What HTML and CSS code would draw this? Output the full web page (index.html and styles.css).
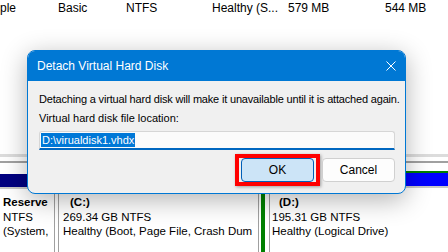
FILE: index.html
```html
<!DOCTYPE html>
<html>
<head>
<meta charset="utf-8">
<link rel="stylesheet" href="styles.css">
</head>
<body>
<div class="screen">
  <div class="list-row">
    <span class="col c1">ple</span>
    <span class="col c2">Basic</span>
    <span class="col c3">NTFS</span>
    <span class="col c4">Healthy (S...</span>
    <span class="col c5">579 MB</span>
    <span class="col c6">544 MB</span>
  </div>
  <div class="blank"></div>
  <div class="band-light"></div>
  <div class="band-dark"></div>
  <div class="parts">
    <div class="part res">
      <div class="hdr navy"></div>
      <div class="txt">
        <div class="name">Reserve</div>
        <div>NTFS</div>
        <div>(System,</div>
      </div>
    </div>
    <div class="part cdrive">
      <div class="hdr navy"></div>
      <div class="txt">
        <div class="name ind">(C:)</div>
        <div>269.34 GB NTFS</div>
        <div>Healthy (Boot, Page File, Crash Dum</div>
      </div>
    </div>
    <div class="ext">
      <div class="part ddrive">
        <div class="hdr blue"></div>
        <div class="txt">
          <div class="name ind">(D:)</div>
          <div>195.31 GB NTFS</div>
          <div>Healthy (Logical Drive)</div>
        </div>
      </div>
    </div>
  </div>
</div>

<div class="dialog">
  <div class="titlebar">
    <span class="title">Detach Virtual Hard Disk</span>
    <svg class="close" width="10" height="10" viewBox="0 0 10 10">
      <path d="M0.5 0.5 L9.5 9.5 M9.5 0.5 L0.5 9.5" stroke="#ffffff" stroke-width="1" fill="none"/>
    </svg>
  </div>
  <div class="body">
    <div class="msg">Detaching a virtual hard disk will make it unavailable until it is attached again.</div>
    <div class="label">Virtual hard disk file location:</div>
    <div class="input"><span class="sel">D:\virualdisk1.vhdx</span></div>
    <div class="buttons">
      <div class="hl"><div class="btn ok">OK</div></div>
      <div class="btn cancel">Cancel</div>
    </div>
  </div>
</div>
</body>
</html>
```

FILE: styles.css
```css
* { box-sizing: border-box; }
html, body { margin: 0; padding: 0; }
body {
  width: 448px;
  height: 252px;
  overflow: hidden;
  background: #ffffff;
  font-family: "Liberation Sans", Arial, sans-serif;
  font-size: 11.5px;
  color: #000;
  position: relative;
}
.screen { width: 448px; height: 252px; overflow: hidden; }

.list-row {
  height: 17px;
  line-height: 17px;
  display: flex;
  white-space: nowrap;
  font-size: 12px;
}
.col { display: block; overflow: hidden; }
.c1 { width: 58px; }
.c2 { width: 68px; }
.c3 { width: 86px; }
.c4 { width: 76px; }
.c5 { width: 97px; }
.c6 { width: 63px; }

.blank { height: 137px; }
.band-light { height: 3px; background: #dcdcdc; }
.band-dark { height: 2px; margin-top: 4px; background: #a0a0a0; }

.parts {
  display: flex;
  padding-top: 8px;
  height: 89px;
  align-items: stretch;
}
.part { overflow: hidden; white-space: nowrap; }
.hdr { height: 15px; border-bottom: 2px solid #c8c8c8; }
.navy { background: #000080; }
.blue { background: #0000ff; }
.txt { padding-top: 6px; line-height: 14.5px; }
.name { font-weight: bold; }
.ind { padding-left: 7px; }

.res { width: 55px; margin-top: 3px; border-right: 1px solid #a0a0a0; }
.res .txt { padding-left: 3px; }
.cdrive { width: 201px; margin-left: 3px; margin-top: 3px; border-left: 1px solid #a0a0a0; border-right: 1px solid #a0a0a0; }
.cdrive .txt { padding-left: 4px; }
.ext {
  margin-left: 2px;
  flex: 1;
  border-top: 2px solid #008000;
  border-left: 4px solid #008000;
  display: flex;
}
.ddrive { flex: 1; margin-left: 4px; border-left: 1px solid #a0a0a0; }
.ddrive .txt { padding-left: 2px; padding-top: 7px; }

/* dialog overlay */
.dialog {
  position: absolute;
  left: 27px;
  top: 50px;
  width: 379px;
  height: 144px;
  border: 1px solid #0078d4;
  border-radius: 8px;
  overflow: hidden;
  background: #f0f0f0;
  box-shadow: 0 6px 26px rgba(0,0,0,0.30);
  display: flex;
  flex-direction: column;
}
.titlebar {
  height: 30px;
  flex: none;
  background: #0078d4;
  color: #fff;
  display: flex;
  align-items: center;
  justify-content: space-between;
  padding: 0 9px 0 9px;
  font-size: 12px;
}
.close { display: block; }
.body {
  flex: 1;
  padding: 11px 10px 0 11px;
  font-size: 11px;
}
.msg { line-height: 14px; white-space: nowrap; letter-spacing: -0.18px; }
.label { line-height: 14px; margin-top: 5px; }
.input {
  margin-top: 6px;
  height: 19px;
  background: #fbfbfb;
  border: 1px solid #d6d6d6;
  border-bottom: 2px solid #0067c0;
  border-radius: 3px 3px 0 0;
  padding: 1px 0 0 1px;
  line-height: 14px;
}
.sel { background: #0078d7; color: #fff; display: inline-block; padding: 0 1px; }
.buttons {
  display: flex;
  justify-content: flex-end;
  align-items: flex-start;
  gap: 2px;
  margin-top: 4px;
}
.hl {
  border: 4px solid #ff0000;
  padding: 0 2px;
  box-shadow: 1px 1px 3px rgba(0,0,0,0.35);
}
.btn {
  width: 73px;
  height: 24px;
  border-radius: 4px;
  display: flex;
  align-items: center;
  justify-content: center;
  font-size: 12px;
}
.ok { background: #cce4f7; border: 1px solid #005fb8; }
.cancel { background: #fdfdfd; border: 1px solid #d0d0d0; margin-top: 4px; }
```
